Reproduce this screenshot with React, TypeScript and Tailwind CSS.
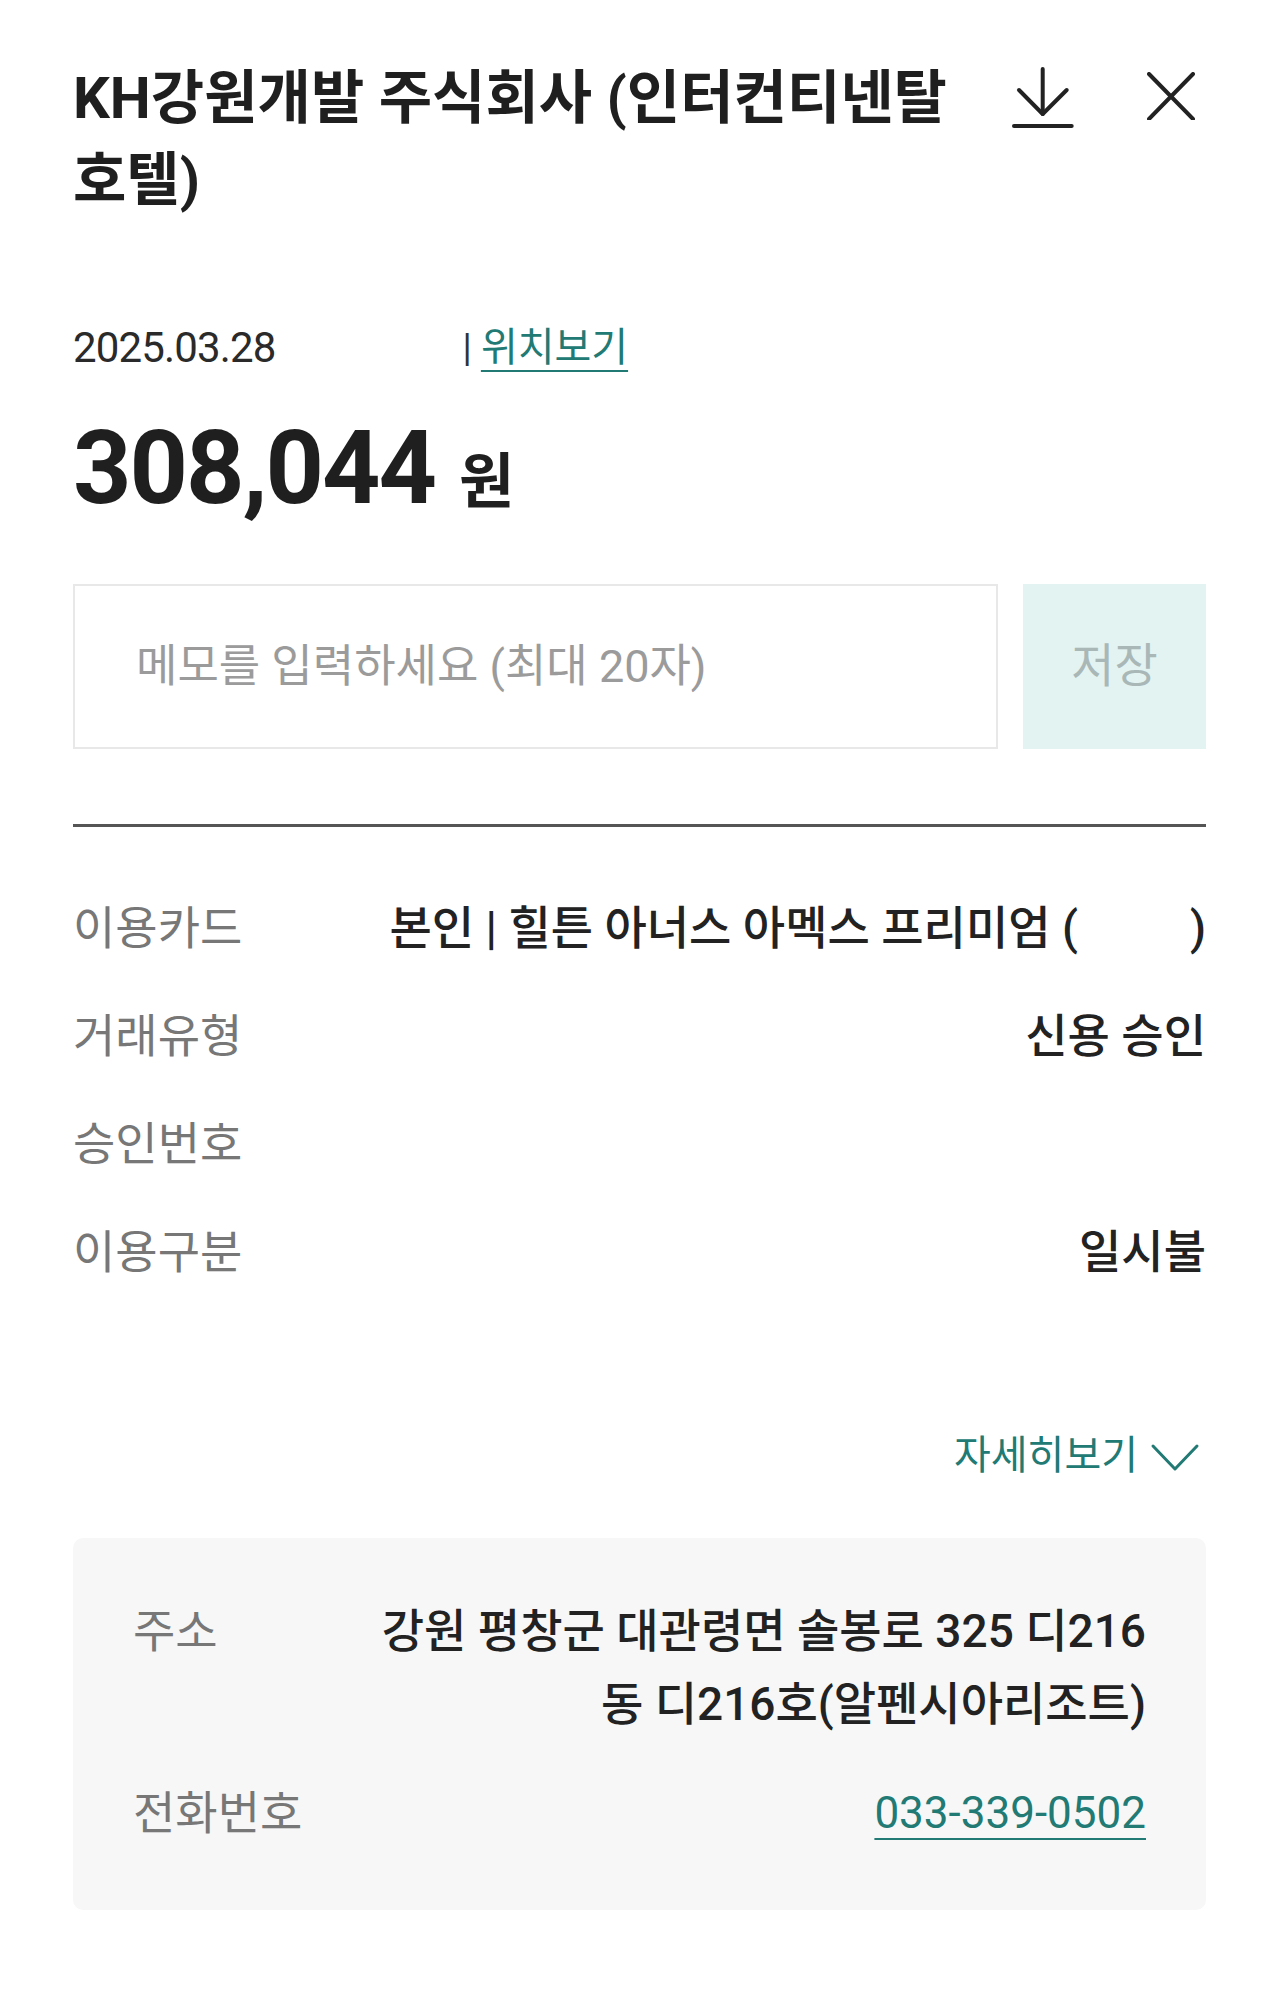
function DownloadIcon() {
  return (
    <svg width="62" height="62" viewBox="0 0 62 62" fill="none" stroke="#222" strokeWidth="4" strokeLinecap="round" strokeLinejoin="round">
      <path d="M30.7 2v45" />
      <path d="M7 23l23.7 24L54.7 23" />
      <path d="M2 59h57.7" />
    </svg>
  );
}

function CloseIcon() {
  return (
    <svg width="48" height="48" viewBox="0 0 48 48" fill="none" stroke="#222" strokeWidth="4" strokeLinecap="round">
      <path d="M2 2l44 45" />
      <path d="M46 2L2 47" />
    </svg>
  );
}

function ChevronDown() {
  return (
    <svg width="50" height="30" viewBox="0 0 50 30" fill="none" stroke="#217a74" strokeWidth="3" strokeLinecap="round" strokeLinejoin="round">
      <path d="M3 4l22 23L47 4" />
    </svg>
  );
}

const rows = [
  { label: "이용카드", value: "card" },
  { label: "거래유형", value: "신용 승인" },
  { label: "승인번호", value: "" },
  { label: "이용구분", value: "일시불" },
];

export default function App() {
  return (
    <div className="min-h-[1997px] w-[1279px] break-keep bg-white font-[Roboto,'Noto_Sans_CJK_KR',sans-serif] text-[#222]">
      <div className="px-[73px] pt-[57px]">
        <header className="flex items-start justify-between">
          <h1 className="w-[920px] text-[58px] font-bold leading-[82px] text-[#1f1f1f]">
            KH강원개발 주식회사 (인터컨티넨탈 호텔)
          </h1>
          <div className="mr-[11px] mt-[10px] flex items-start gap-[73px]">
            <DownloadIcon />
            <div className="mt-[5px]">
              <CloseIcon />
            </div>
          </div>
        </header>

        <div className="mt-[103px] flex items-center text-[42px] leading-[48px] text-[#2a2a2a]">
          <span className="tracking-[-0.02em]">2025.03.28</span>
          <span className="inline-block w-[187px]" />
          <span className="text-[38px] text-[#333]">|</span>
          <span className="ml-[9px] text-[40px] text-[#217a74] underline decoration-2 underline-offset-[9px]">
            위치보기
          </span>
        </div>

        <div className="mt-[46px] flex items-baseline">
          <span className="text-[102px] font-bold leading-[100px] tracking-[-0.02em] text-[#1f1f1f]">308,044</span>
          <span className="ml-[24px] text-[60px] font-bold leading-none text-[#1f1f1f]">원</span>
        </div>

        <div className="mt-[66px] flex h-[165px] gap-[25px]">
          <div className="flex flex-1 items-center border-2 border-[#e8e8e8]">
            <input
              className="h-full w-full bg-transparent pl-[61px] text-[45px] text-[#222] outline-none placeholder:text-[#9b9b9b]"
              placeholder="메모를 입력하세요 (최대 20자)"
            />
          </div>
          <button className="flex w-[183px] items-center justify-center bg-[#e3f3f2] text-[47px] text-[#a9b8b7]">
            저장
          </button>
        </div>

        <div className="mt-[75px] h-[3px] bg-[#555]" />

        <div className="mt-[47px]">
          {rows.map((r) => (
            <div key={r.label} className="flex h-[108px] items-center justify-between text-[46px]">
              <span className="text-[#777]">{r.label}</span>
              {r.value === "card" ? (
                <span className="font-medium text-[#222]">
                  본인 | 힐튼 아너스 아멕스 프리미엄 (<span className="inline-block w-[112px]" />)
                </span>
              ) : (
                <span className="font-medium text-[#222]">{r.value}</span>
              )}
            </div>
          ))}
        </div>

        <div className="mt-[126px] flex h-[48px] items-center justify-end pr-[6px]">
          <span className="text-[40px] text-[#217a74]">자세히보기</span>
          <span className="ml-[12px] mt-[2px]">
            <ChevronDown />
          </span>
        </div>

        <div className="mt-[58px] rounded-[10px] bg-[#f7f7f7] px-[60px] pb-[60px] pt-[57px] text-[46px] leading-[73px]">
          <div className="flex justify-between">
            <span className="text-[#777]">주소</span>
            <span className="text-right font-medium text-[#222]">
              강원 평창군 대관령면 솔봉로 325 디216
              <br />동 디216호(알펜시아리조트)
            </span>
          </div>
          <div className="mt-[36px] flex justify-between">
            <span className="text-[#777]">전화번호</span>
            <span className="text-[44px] text-[#217a74] underline decoration-2 underline-offset-[10px]">033-339-0502</span>
          </div>
        </div>
      </div>
    </div>
  );
}
